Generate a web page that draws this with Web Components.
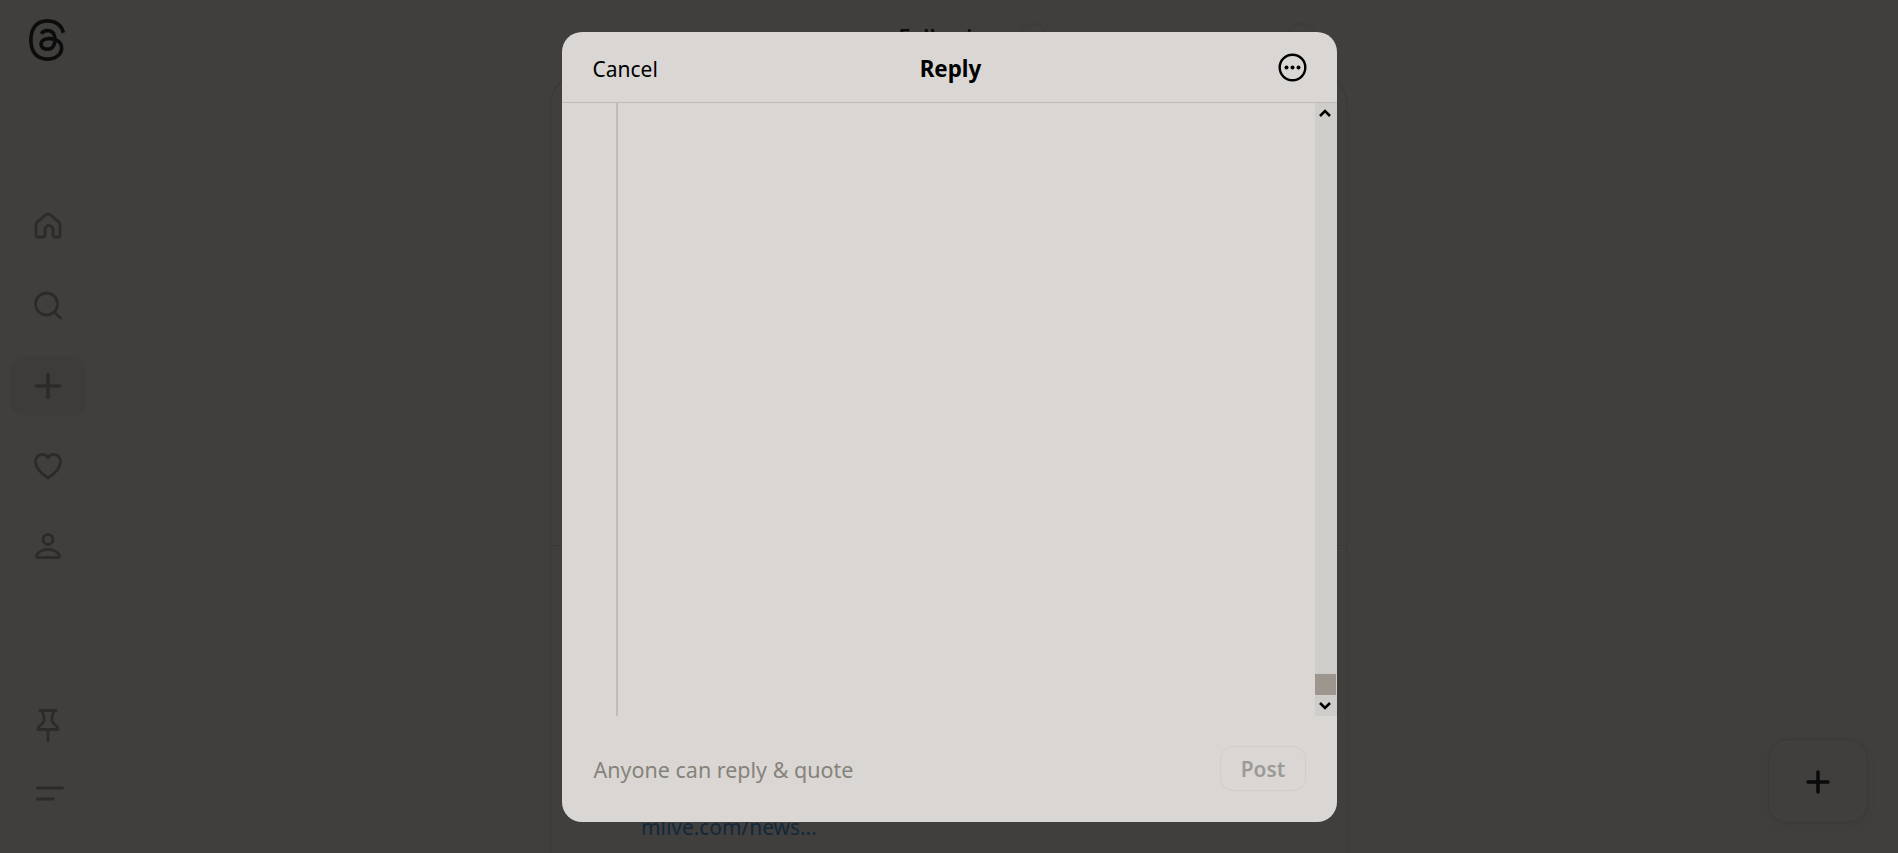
<!DOCTYPE html>
<html lang="en">
<head>
<meta charset="utf-8">
<title>Threads</title>
<style>
	html, body {
		margin: 0;
		height: 100%;
		background: #403f3d;
		font-family: "Noto Sans", "Open Sans", "Liberation Sans", sans-serif;
		overflow: hidden;
	}
</style>
</head>
<body>
<threads-app>
	<side-rail slot="rail"></side-rail>
	<feed-column slot="feed">
		<span slot="title">Following</span>
		<a slot="link">mlive.com/news...</a>
	</feed-column>
	<compose-fab slot="fab"></compose-fab>
	<reply-dialog slot="dialog">
		<span slot="cancel">Cancel</span>
		<span slot="title">Reply</span>
		<span slot="audience">Anyone can reply &amp; quote</span>
		<span slot="post">Post</span>
	</reply-dialog>
</threads-app>

<script>
const appTemplate = document.createElement('template');
appTemplate.innerHTML = `
	<style>
		:host {
			display: grid;
			grid-template-columns: 96px 1fr 96px;
			height: 853px;
			position: relative;
			overflow: hidden;
		}
		.center {
			display: flex;
			justify-content: center;
			min-width: 0;
		}
		.overlay {
			position: absolute;
			inset: 0;
			display: flex;
			justify-content: center;
			align-items: center;
		}
	</style>
	<slot name="rail"></slot>
	<div class="center"><slot name="feed"></slot></div>
	<div></div>
	<slot name="fab"></slot>
	<div class="overlay"><slot name="dialog"></slot></div>
`;

class ThreadsApp extends HTMLElement {
	constructor () {
		super();
		this.attachShadow({ mode : 'open' }).appendChild(appTemplate.content.cloneNode(true));
	}
}

const railTemplate = document.createElement('template');
railTemplate.innerHTML = `
	<style>
		:host {
			display: flex;
			flex-direction: column;
			align-items: center;
			height: 853px;
			box-sizing: border-box;
			padding: 19px 0 30px;
		}
		.logo { display: block; width: 36px; height: 42px; margin-right: 2px; color: #0c0c0c; }
		nav {
			display: flex;
			flex-direction: column;
			gap: 20px;
			margin-top: 135px;
		}
		.bottom {
			display: flex;
			flex-direction: column;
			gap: 8px;
			margin-top: auto;
		}
		.item {
			width: 75px;
			height: 60px;
			display: flex;
			align-items: center;
			justify-content: center;
			border-radius: 14px;
		}
		.item.active { background: #3d3c3a; }
		.item svg {
			display: block;
			fill: none;
			stroke: #2c2b2a;
			stroke-width: 2.8;
			stroke-linecap: round;
			stroke-linejoin: round;
		}
	</style>
	<svg class="logo" viewBox="13 0 164 192" fill="currentColor"><path d="M141.537 88.9883C140.71 88.5919 139.87 88.2104 139.019 87.8451C137.537 60.5382 122.616 44.905 97.5619 44.745C97.4484 44.7443 97.3355 44.7443 97.222 44.7443C82.2364 44.7443 69.7731 51.1409 62.102 62.7807L75.881 72.2328C81.6116 63.5383 90.6052 61.6848 97.2286 61.6848C97.3051 61.6848 97.3819 61.6848 97.4576 61.6855C105.707 61.7381 111.932 64.1366 115.961 68.814C118.893 72.2193 120.854 76.925 121.825 82.8638C114.511 81.6207 106.601 81.2385 98.145 81.7233C74.3247 83.0954 59.0111 96.9879 60.0396 116.292C60.5615 126.084 65.4397 134.508 73.775 140.011C80.8224 144.663 89.899 146.938 99.3323 146.423C111.79 145.74 121.563 140.987 128.381 132.296C133.559 125.696 136.834 117.143 138.28 106.366C144.217 109.949 148.617 114.664 151.047 120.332C155.179 129.967 155.42 145.8 142.501 158.708C131.182 170.016 117.576 174.908 97.0135 175.059C74.2042 174.89 56.9538 167.575 45.7381 153.317C35.2355 139.966 29.8077 120.682 29.6052 96C29.8077 71.3178 35.2355 52.0336 45.7381 38.6827C56.9538 24.4249 74.2039 17.11 97.0132 16.9405C119.988 17.1113 137.539 24.4614 149.184 38.788C154.894 45.8136 159.199 54.6488 162.037 64.9503L178.184 60.6422C174.744 47.9622 169.331 37.0357 161.965 27.974C147.036 9.60668 125.202 0.195148 97.0695 0H96.9569C68.8816 0.19447 47.2921 9.6418 32.7883 28.0793C19.8819 44.4864 13.2244 67.3157 13.0007 95.9325L13 96L13.0007 96.0675C13.2244 124.684 19.8819 147.514 32.7883 163.921C47.2921 182.358 68.8816 191.806 96.9569 192H97.0695C122.03 191.827 139.624 185.292 154.118 170.811C173.081 151.866 172.51 128.119 166.26 113.541C161.776 103.087 153.227 94.5962 141.537 88.9883ZM98.4405 129.507C88.0005 130.095 77.1544 125.409 76.6196 115.372C76.2232 107.93 81.9158 99.626 99.0812 98.6368C101.047 98.5234 102.976 98.468 104.871 98.468C111.106 98.468 116.939 99.0737 122.242 100.233C120.264 124.935 108.662 128.946 98.4405 129.507Z"/></svg>
	<nav>
		<div class="item"><svg width="30" height="30" viewBox="0 0 30 30"><path d="M3 24V13.8c0-1.2.5-2.2 1.4-3l8-6.600c1.500-1.200 3.700-1.200 5.200 0l8 6.600c.9.800 1.400 1.800 1.400 3V24c0 1.200-.8 2-2 2h-3.500c-1.100 0-1.500-.7-1.500-1.700V18.500c0-2.200-1.800-4-4-4s-4 1.800-4 4v5.800c0 1-.4 1.700-1.500 1.700H5c-1.200 0-2-.8-2-2z"/></svg></div>
		<div class="item"><svg width="30" height="30" viewBox="0 0 30 30"><circle cx="13.500" cy="13" r="11"/><path d="M21.500 21.500 L27.500 27"/></svg></div>
		<div class="item active"><svg width="30" height="30" viewBox="0 0 30 30" style="stroke-width:3.600"><path d="M15 3.500V26.500M3.500 15H26.500"/></svg></div>
		<div class="item"><svg width="30" height="30" viewBox="0 0 30 30"><path d="M15 27 C12 25 2.500 19 2.500 10.500 C2.500 6 6 3.300 9.500 3.300 C12 3.300 14 4.500 15 6.800 C16 4.500 18 3.300 20.500 3.300 C24 3.300 27.500 6 27.500 10.500 C27.500 19 18 25 15 27z"/></svg></div>
		<div class="item"><svg width="30" height="30" viewBox="0 0 30 30"><circle cx="15" cy="8.500" r="5"/><path d="M4.500 26.500 C3.500 26.500 3.200 25.800 3.500 24.800 C4.700 20.800 9.500 18.500 15 18.500 C20.500 18.500 25.300 20.800 26.500 24.800 C26.800 25.800 26.500 26.500 25.500 26.500z"/></svg></div>
	</nav>
	<div class="bottom">
		<div class="item"><svg width="30" height="36" viewBox="0 0 30 36"><path d="M7 3.500H23M9 3.500L11 9.500V14C11 16.500 5 18 5 22.500H25C25 18 19 16.500 19 14V9.500L21 3.500M15 22.500V34"/></svg></div>
		<div class="item"><svg width="32" height="30" viewBox="0 0 32 30" style="stroke-width:3.200"><path d="M5.600 10H30.400M5.600 21H21.400"/></svg></div>
	</div>
`;

class SideRail extends HTMLElement {
	constructor () {
		super();
		this.attachShadow({ mode : 'open' }).appendChild(railTemplate.content.cloneNode(true));
	}
}

const feedTemplate = document.createElement('template');
feedTemplate.innerHTML = `
	<style>
		:host {
			display: flex;
			flex-direction: column;
			width: 798px;
			height: 853px;
		}
		header {
			height: 72px;
			flex: none;
			display: flex;
			justify-content: center;
			padding-top: 24px;
			box-sizing: border-box;
			position: relative;
			font-size: 21.5px;
			font-weight: 600;
			color: #0c0c0c;
			line-height: 26px;
		}
		.round {
			position: absolute;
			top: 23px;
			width: 27px;
			height: 27px;
			border-radius: 50%;
			border: 1px solid #3a3937;
			box-sizing: border-box;
		}
		.round.a { left: 469px; }
		.round.b { left: 739px; }
		.card {
			flex: 1;
			border: 1px solid #3a3937;
			border-bottom: none;
			border-radius: 34px 34px 0 0;
			display: flex;
			flex-direction: column;
		}
		.post { height: 472px; flex: none; border-bottom: 1px solid #3a3937; }
		.next {
			flex: 1;
			box-sizing: border-box;
			padding: 267px 0 0 90px;
			font-size: 20.9px;
			line-height: 28px;
			color: #12283c;
		}
	</style>
	<header><slot name="title"></slot><span class="round a"></span><span class="round b"></span></header>
	<div class="card">
		<div class="post"></div>
		<div class="next"><slot name="link"></slot></div>
	</div>
`;

class FeedColumn extends HTMLElement {
	constructor () {
		super();
		this.attachShadow({ mode : 'open' }).appendChild(feedTemplate.content.cloneNode(true));
	}
}

const fabTemplate = document.createElement('template');
fabTemplate.innerHTML = `
	<style>
		:host {
			position: absolute;
			left: 1768px;
			top: 739px;
			width: 100px;
			height: 84px;
			box-sizing: border-box;
			display: flex;
			align-items: center;
			justify-content: center;
			padding-top: 2px;
			background: #403f3d;
			border: 1px solid #3a3937;
			border-radius: 20px;
			box-shadow: 0 4px 12px rgba(0, 0, 0, .05);
		}
		svg { display: block; fill: none; stroke: #0a0a0a; stroke-width: 3.500; stroke-linecap: round; }
	</style>
	<svg width="26" height="26" viewBox="0 0 26 26"><path d="M13 3V23M3 13H23"/></svg>
`;

class ComposeFab extends HTMLElement {
	constructor () {
		super();
		this.attachShadow({ mode : 'open' }).appendChild(fabTemplate.content.cloneNode(true));
	}
}

const dialogTemplate = document.createElement('template');
dialogTemplate.innerHTML = `
	<style>
		:host {
			display: flex;
			flex-direction: column;
			width: 775px;
			height: 790px;
			background: #d9d6d3;
			border-radius: 20px;
			overflow: hidden;
			color: #000;
			font-size: 21px;
		}
		header {
			flex: none;
			height: 71px;
			box-sizing: border-box;
			border-bottom: 1px solid #bfbcb7;
			padding: 4px 30px 0 31px;
			display: grid;
			grid-template-columns: 1fr auto 1fr;
			align-items: center;
			line-height: 28px;
		}
		.title { font-weight: 700; font-size: 22.400px; margin-left: 2px; }
		.more { justify-self: end; display: block; margin-top: -2px; }
		.body { flex: 1; display: flex; min-height: 0; }
		.content { flex: 1; padding-left: 54px; }
		.thread { width: 2px; height: 100%; background: #c0bdb8; }
		footer {
			flex: none;
			height: 106px;
			box-sizing: border-box;
			padding: 2px 31px 0 32px;
			display: flex;
			align-items: center;
			justify-content: space-between;
			font-size: 21.5px;
			color: #86827a;
		}
		.post {
			width: 86px;
			height: 45px;
			margin-top: -2px;
			padding-left: 1px;
			box-sizing: border-box;
			border: 1px solid #cfccc9;
			border-radius: 13px;
			display: flex;
			align-items: center;
			justify-content: center;
			color: #9c9a97;
			font-size: 20.800px;
			font-weight: 600;
		}
	</style>
	<header>
		<slot name="cancel"></slot>
		<span class="title"><slot name="title"></slot></span>
		<svg class="more" width="29" height="29" viewBox="0 0 29 29"><circle cx="14.500" cy="14.500" r="12.800" fill="none" stroke="#000" stroke-width="2.400"/><circle cx="8.500" cy="14.500" r="2"/><circle cx="14.500" cy="14.500" r="2"/><circle cx="20.500" cy="14.500" r="2"/></svg>
	</header>
	<div class="body">
		<div class="content"><div class="thread"></div></div>
		<scroll-track></scroll-track>
	</div>
	<footer>
		<slot name="audience"></slot>
		<span class="post"><slot name="post"></slot></span>
	</footer>
`;

class ReplyDialog extends HTMLElement {
	constructor () {
		super();
		this.attachShadow({ mode : 'open' }).appendChild(dialogTemplate.content.cloneNode(true));
	}
}

const trackTemplate = document.createElement('template');
trackTemplate.innerHTML = `
	<style>
		:host {
			display: flex;
			flex-direction: column;
			flex: none;
			width: 22px;
			background: #cfcdc9;
		}
		.arrow { flex: none; height: 21px; display: flex; align-items: center; justify-content: center; padding-right: 2px; }
		.arrow.down { padding-top: 2px; height: 19px; }
		.arrow svg { display: block; fill: none; stroke: #000; stroke-width: 2.600; }
		.rail { flex: 1; display: flex; flex-direction: column; justify-content: flex-end; }
		.thumb { height: 21px; margin-right: 1px; background: #9c968f; }
	</style>
	<div class="arrow"><svg width="12" height="8" viewBox="0 0 12 8"><path d="M1 7L6 2L11 7"/></svg></div>
	<div class="rail"><div class="thumb"></div></div>
	<div class="arrow down"><svg width="12" height="8" viewBox="0 0 12 8"><path d="M1 1L6 6L11 1"/></svg></div>
`;

class ScrollTrack extends HTMLElement {
	constructor () {
		super();
		this.attachShadow({ mode : 'open' }).appendChild(trackTemplate.content.cloneNode(true));
	}
}

window.customElements.define('threads-app', ThreadsApp);
window.customElements.define('side-rail', SideRail);
window.customElements.define('feed-column', FeedColumn);
window.customElements.define('compose-fab', ComposeFab);
window.customElements.define('scroll-track', ScrollTrack);
window.customElements.define('reply-dialog', ReplyDialog);
</script>
</body>
</html>
